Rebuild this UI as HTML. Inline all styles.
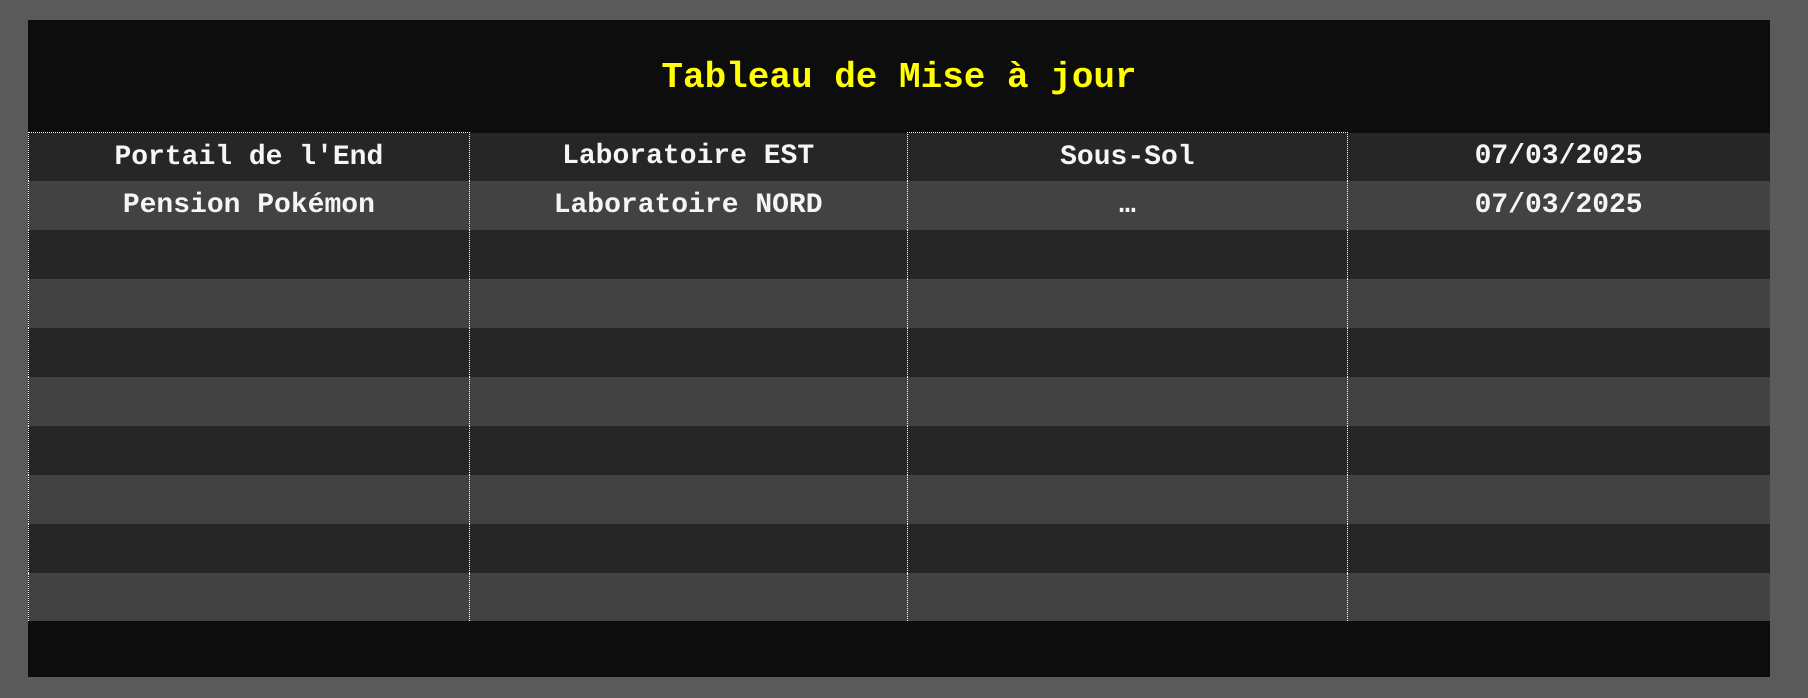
<!DOCTYPE html>
<html><head><style>
html,body{margin:0;padding:0;background:#5a5a5a;width:1808px;height:698px;overflow:hidden}
#box{position:absolute;left:28px;top:20px;width:1742px;height:657px;background:#0d0d0d}
#title{position:absolute;left:0;top:0;width:1742px;height:112px;text-align:center;color:#ffff00;font:bold 36px "Liberation Mono",monospace;line-height:115px}
table{position:absolute;left:0;top:112px;border-collapse:collapse;table-layout:fixed}
td{height:48.9px;padding:0;text-align:center;color:#f5f5f5;font:bold 28px "Liberation Mono",monospace;box-sizing:border-box}
tr:nth-child(odd) td{background:#262626}
tr:nth-child(even) td{background:#424242}
td.c1{border-left:1px dotted #fff;border-right:1px dotted #fff}
td.c3{border-left:1px dotted #fff;border-right:1px dotted #fff}
tr:first-child td.c1,tr:first-child td.c3{border-top:1px dotted #fff}
</style></head><body>
<div id="box">
<div id="title">Tableau de Mise à jour</div>
<table>
<colgroup><col style="width:441px"><col style="width:438px"><col style="width:441px"><col style="width:422px"></colgroup>
<tr><td class="c1">Portail de l'End</td><td>Laboratoire EST</td><td class="c3">Sous-Sol</td><td>07/03/2025</td></tr>
<tr><td class="c1">Pension Pokémon</td><td>Laboratoire NORD</td><td class="c3">…</td><td>07/03/2025</td></tr>
<tr><td class="c1"></td><td></td><td class="c3"></td><td></td></tr>
<tr><td class="c1"></td><td></td><td class="c3"></td><td></td></tr>
<tr><td class="c1"></td><td></td><td class="c3"></td><td></td></tr>
<tr><td class="c1"></td><td></td><td class="c3"></td><td></td></tr>
<tr><td class="c1"></td><td></td><td class="c3"></td><td></td></tr>
<tr><td class="c1"></td><td></td><td class="c3"></td><td></td></tr>
<tr><td class="c1"></td><td></td><td class="c3"></td><td></td></tr>
<tr><td class="c1"></td><td></td><td class="c3"></td><td></td></tr>
</table>
</div>
</body></html>
